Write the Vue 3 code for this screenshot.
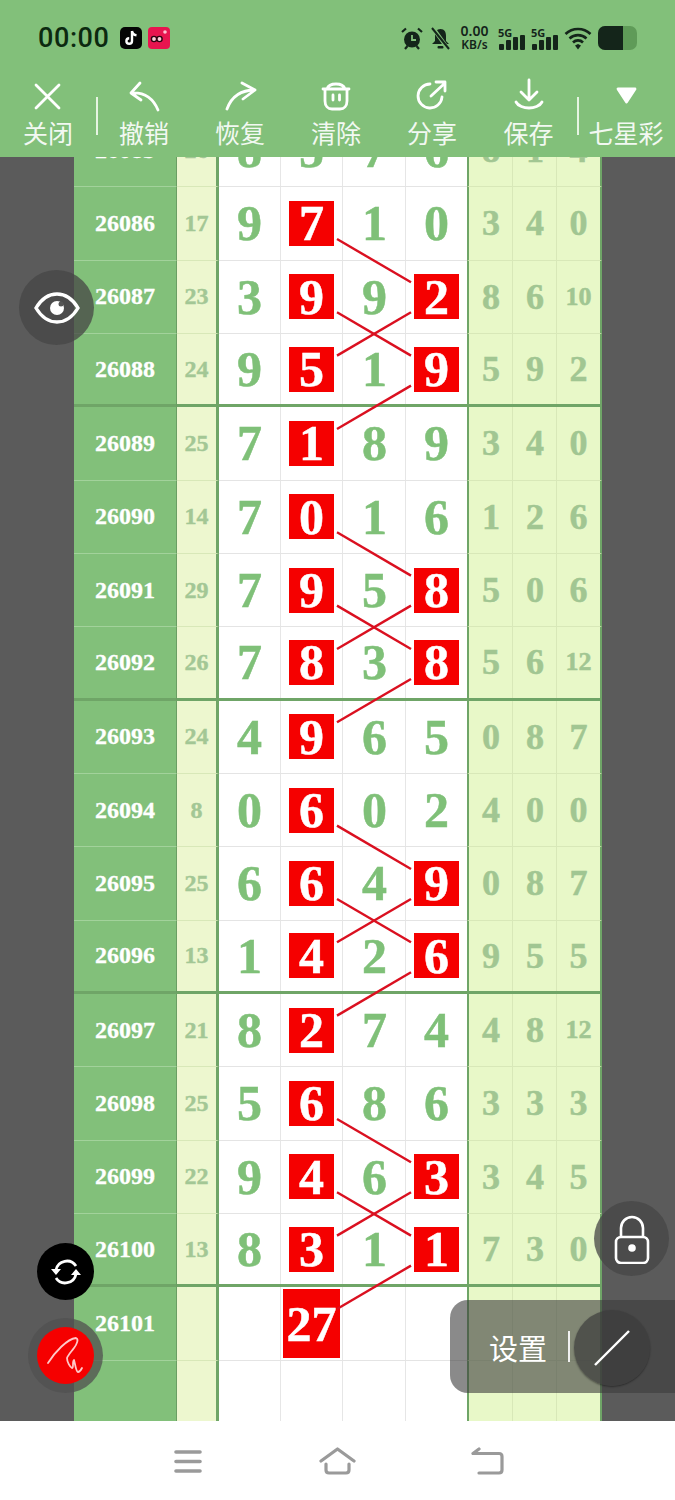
<template>
  <div class="screen">
    <!-- barra superior -->
    <header class="top">
      <div class="status">
        <span class="clock">00:00</span>
        <svg class="app-icon" width="22" height="22" viewBox="0 0 22 22">
          <rect width="22" height="22" rx="5" fill="#050505" />
          <path d="M12 4v10a2.8 2.8 0 1 1-2.8-2.8M12 4c.3 2.500 2 4 4.500 4.300" fill="none" stroke="#fff" stroke-width="2.400" />
        </svg>
        <svg class="app-icon" width="22" height="22" viewBox="0 0 22 22">
          <rect width="22" height="22" rx="4" fill="#e8144f" />
          <circle cx="6" cy="12" r="2.600" fill="#ffd0dc" stroke="#2a0410" stroke-width="1.400" />
          <circle cx="11.500" cy="12" r="2.600" fill="#ffd0dc" stroke="#2a0410" stroke-width="1.400" />
          <circle cx="17" cy="5" r="1.800" fill="#ffc0d0" />
        </svg>
        <div class="status-right">
          <svg class="alarm" width="22" height="23" viewBox="0 0 22 23">
            <circle cx="11" cy="12.500" r="8" fill="#14251a" />
            <path d="M11 8v5h4" fill="none" stroke="#82c07a" stroke-width="1.800" />
            <path d="M1 5l4-3.500M21 5l-4-3.500M4 22l2.500-3M18 22l-2.500-3" stroke="#14251a" stroke-width="2.200" />
          </svg>
          <svg class="bell" width="21" height="23" viewBox="0 0 21 23">
            <path d="M10.500 2C6.500 2 5 5 5 9v5l-3 3h17l-3-3V9c0-4-1.500-7-5.500-7z" fill="#14251a" />
            <rect x="7.500" y="19" width="6" height="2.500" rx="1" fill="#14251a" />
            <path d="M3 1l15 21" stroke="#82c07a" stroke-width="4" />
            <path d="M2 1l17 21" stroke="#14251a" stroke-width="2" />
          </svg>
          <div class="speed"><b>0.00</b><span>KB/s</span></div>
          <div v-for="n in 2" :key="n" class="signal">
            <span class="five-g">5G</span>
            <i v-for="h in [6, 10, 13, 15]" :key="h" :style="{ height: h + 'px' }"></i>
          </div>
          <svg class="wifi" width="28" height="23" viewBox="0 0 28 23">
            <path d="M1.500 7a18 18 0 0 1 25 0M5.500 11.500a12.500 12.500 0 0 1 17 0M9 15.500a7 7 0 0 1 10 0" fill="none" stroke="#14251a" stroke-width="2.600" />
            <path d="M11 18.500l3-1.500 3 1.500-3 4z" fill="#14251a" />
          </svg>
          <div class="battery"><div class="level"></div></div>
        </div>
      </div>

      <nav class="tools">
        <div v-for="tool in tools" :key="tool.label" class="tool" :class="{ sep: tool.sep }" :style="{ width: tool.w + 'px' }">
          <svg width="36" height="36" viewBox="0 0 36 36" fill="none" stroke="#fff" stroke-width="2.800" stroke-linecap="round" stroke-linejoin="round">
            <g v-if="tool.icon === 'close'"><path d="M6 7l23 23M29 7L6 30" /></g>
            <g v-if="tool.icon === 'undo'"><path d="M14 5L5 15l10 7M5 15c13-1 22 5 27 17" /></g>
            <g v-if="tool.icon === 'redo'"><path d="M20 5l13 7-12 9M33 12C18 12 9 20 5 31" /></g>
            <g v-if="tool.icon === 'clear'"><path d="M5 11h26M9 11c1-3 4-5 9-5s8 2 9 5M7 11v12c0 5 3 8 7 8h8c4 0 7-3 7-8V11M15 17v5M21.500 17v5" /></g>
            <g v-if="tool.icon === 'share'"><path d="M28 19a12 12 0 1 1-12-13M17 18L31 5M22 4h9v9" /></g>
            <g v-if="tool.icon === 'save'"><path d="M18 2v20M10 14l8 8 8-8M5 24c2 4 8 6 13 6s11-2 13-6" /></g>
            <g v-if="tool.icon === 'down'"><path d="M10 11h17l-8.500 13z" fill="#fff" /></g>
          </svg>
          <span>{{ tool.label }}</span>
        </div>
      </nav>
    </header>

    <!-- tabla de sorteos -->
    <main class="sheet">
      <div class="table-clip">
        <div class="table">
          <div v-for="(row, r) in rows" :key="r" class="row" :class="{ thick: row.thick }">
            <div class="id">{{ row.id }}</div>
            <div class="sum">{{ row.sum }}</div>
            <div class="cells">
              <div v-for="(d, c) in row.digits" :key="c" class="cell">
                <span v-if="row.reds.includes(c)" class="red">{{ d }}</span>
                <template v-else>{{ d }}</template>
              </div>
              <span v-if="row.big" class="big">{{ row.big }}</span>
            </div>
            <div class="extras">
              <div v-for="(d, c) in row.extra" :key="c" class="extra" :class="{ small: String(d).length > 1 }">{{ d }}</div>
            </div>
          </div>
          <svg class="links" width="600" height="1400">
            <line v-for="(l, i) in links" :key="i" :x1="l.x1" :y1="l.y1" :x2="l.x2" :y2="l.y2" stroke="#da1020" stroke-width="2.400" />
          </svg>
        </div>
      </div>
    </main>

    <footer class="nav">
      <svg width="32" height="26" viewBox="0 0 32 26" fill="none" stroke="#9a9a9a" stroke-width="3.600" stroke-linecap="round">
        <path d="M4 4h24M4 13.500h24M4 23h24" />
      </svg>
      <svg width="37" height="28" viewBox="0 0 37 28" fill="none" stroke="#9a9a9a" stroke-width="3.200" stroke-linecap="round" stroke-linejoin="round">
        <path d="M2 14L18.500 2 35 14M7 17v6c0 2 1 3 3 3h17c2 0 3-1 3-3v-6" />
      </svg>
      <svg width="34" height="28" viewBox="0 0 34 28" fill="none" stroke="#9a9a9a" stroke-width="3.200" stroke-linecap="round" stroke-linejoin="round">
        <path d="M8 2L2 6.500h26c2 0 3 1 3 3V23c0 2-1 3-3 3H8" />
      </svg>
    </footer>

    <!-- controles flotantes -->
    <button class="float eye">
      <svg width="46" height="34" viewBox="0 0 46 34">
        <path d="M2 17C8 7 15 3 23 3s15 4 21 14c-6 10-13 14-21 14S8 27 2 17z" fill="none" stroke="#fff" stroke-width="3.400" />
        <circle cx="23" cy="17" r="7" fill="#fff" />
        <circle cx="27" cy="13" r="2.500" fill="#555" />
      </svg>
    </button>
    <button class="float lock">
      <svg width="36" height="50" viewBox="0 0 36 50" fill="none" stroke="#fff" stroke-width="2.600">
        <path d="M7 23v-9a11 11 0 0 1 22 0v9" />
        <rect x="2" y="23" width="32" height="26" rx="5" />
        <circle cx="18" cy="34" r="3.800" fill="#fff" stroke="none" />
      </svg>
    </button>
    <button class="float sync">
      <svg width="30" height="30" viewBox="0 0 30 30" fill="none" stroke="#fff" stroke-width="2.800">
        <path d="M25 9A11 11 0 0 0 5 13M5 21A11 11 0 0 0 25 17" />
        <path d="M0 12h10l-5 6zM20 18h10l-5-6z" fill="#fff" stroke="none" />
      </svg>
    </button>
    <div class="float pen-ring">
      <div class="pen">
        <svg width="57" height="57" viewBox="0 0 57 57" fill="none" stroke="#ffc8c8" stroke-width="1.800" stroke-linecap="round" stroke-linejoin="round">
          <path d="M11 36C18 25 30 12 39 11c3 1 1 6-2 10-3 4-6 7-7 10 0 4 3 9 5 10 2 0 0-7 2-8 1 3 2 12 4 12 2 0 3-2 4-4" />
        </svg>
      </div>
    </div>
    <div class="settings">
      <span>设置</span>
      <i class="bar"></i>
      <div class="slash">
        <svg width="38" height="38" viewBox="0 0 38 38"><path d="M2 36L36 2" stroke="#fff" stroke-width="2.400" /></svg>
      </div>
    </div>
  </div>
</template>

<script setup>
const tools = [
  { label: '关闭', icon: 'close', w: 96 },
  { label: '撤销', icon: 'undo', w: 96, sep: true },
  { label: '恢复', icon: 'redo', w: 96 },
  { label: '清除', icon: 'clear', w: 96 },
  { label: '分享', icon: 'share', w: 96 },
  { label: '保存', icon: 'save', w: 97 },
  { label: '七星彩', icon: 'down', w: 98, sep: true }
]

// id, suma, cuatro cifras, posiciones en rojo, tres cifras extra
const raw = [
  [26085, 26, [8, 5, 7, 6], [], [8, 1, 4]],
  [26086, 17, [9, 7, 1, 0], [1], [3, 4, 0]],
  [26087, 23, [3, 9, 9, 2], [1, 3], [8, 6, 10]],
  [26088, 24, [9, 5, 1, 9], [1, 3], [5, 9, 2]],
  [26089, 25, [7, 1, 8, 9], [1], [3, 4, 0]],
  [26090, 14, [7, 0, 1, 6], [1], [1, 2, 6]],
  [26091, 29, [7, 9, 5, 8], [1, 3], [5, 0, 6]],
  [26092, 26, [7, 8, 3, 8], [1, 3], [5, 6, 12]],
  [26093, 24, [4, 9, 6, 5], [1], [0, 8, 7]],
  [26094, 8, [0, 6, 0, 2], [1], [4, 0, 0]],
  [26095, 25, [6, 6, 4, 9], [1, 3], [0, 8, 7]],
  [26096, 13, [1, 4, 2, 6], [1, 3], [9, 5, 5]],
  [26097, 21, [8, 2, 7, 4], [1], [4, 8, 12]],
  [26098, 25, [5, 6, 8, 6], [1], [3, 3, 3]],
  [26099, 22, [9, 4, 6, 3], [1, 3], [3, 4, 5]],
  [26100, 13, [8, 3, 1, 1], [1, 3], [7, 3, 0]]
]

const rows = raw.map((r, i) => ({
  id: r[0],
  sum: r[1],
  digits: r[2],
  reds: r[3],
  extra: r[4],
  thick: i % 4 === 3
}))
rows.push({ id: 26101, sum: '', digits: ['', '', '', ''], reds: [], extra: ['', '', ''], big: 27, thick: false })
rows.push({ id: '', sum: '', digits: ['', '', '', ''], reds: [], extra: ['', '', ''], thick: false })

const ROW = 73.33
const center = (i) => ROW * i + ROW / 2

// [fila columna 2, fila columna 4]
const pairs = [
  [1, 2], [3, 2], [2, 3], [4, 3],
  [5, 6], [7, 6], [6, 7], [8, 7],
  [9, 10], [11, 10], [10, 11], [12, 11],
  [13, 14], [15, 14], [14, 15], [16, 15]
]
const links = pairs.map(([a, b]) => {
  const dir = b > a ? 1 : -1
  return { x1: 263, y1: center(a) + 15 * dir, x2: 337, y2: center(b) - 15 * dir }
})
</script>

<style>
html, body { margin: 0; padding: 0; }
</style>

<style scoped>
.screen {
  position: relative;
  width: 675px;
  height: 1500px;
  overflow: hidden;
  display: flex;
  flex-direction: column;
  font-family: "Liberation Serif", serif;
}

/* cabecera */
.top {
  height: 157px;
  background: #82c07a;
  flex: none;
}
.status {
  display: flex;
  align-items: center;
  height: 76px;
  padding: 0 38px;
  box-sizing: border-box;
}
.clock {
  font: 500 27px "Roboto", sans-serif;
  letter-spacing: 0.600px;
  color: #0c2a10;
  margin-right: 10px;
}
.app-icon { margin-right: 6px; }
.status-right {
  margin-left: auto;
  display: flex;
  align-items: center;
}
.bell { margin-left: 7px; }
.speed {
  display: flex;
  flex-direction: column;
  align-items: center;
  width: 29px;
  margin: 0 9px;
  font: 700 14px "Noto Sans", sans-serif;
  line-height: 14px;
  color: #14251a;
}
.speed b { font-weight: 600; }
.speed span { font-size: 12px; font-weight: 600; }
.signal {
  position: relative;
  display: flex;
  align-items: flex-end;
  gap: 2px;
  height: 24px;
  width: 27px;
  margin-right: 6px;
  padding-left: 1px;
  box-sizing: border-box;
}
.signal i {
  width: 5px;
  background: #14251a;
  border-radius: 1px;
}
.five-g {
  position: absolute;
  left: 0;
  top: -1px;
  font: 700 11px "Noto Sans", sans-serif;
  color: #14251a;
}
.wifi { margin-right: 6px; }
.battery {
  width: 39px;
  height: 24px;
  border-radius: 7px;
  background: #5f9b58;
  overflow: hidden;
}
.level {
  width: 25px;
  height: 100%;
  background: #14251a;
}
.tools {
  display: flex;
  height: 81px;
}
.tool {
  position: relative;
  display: flex;
  flex-direction: column;
  align-items: center;
  color: #fff;
  font: 400 25px "Noto Sans CJK SC", sans-serif;
  line-height: 34px;
}
.tool svg { margin-top: 2px; margin-bottom: 1px; }
.tool span { opacity: 0.9; white-space: nowrap; }
.tool.sep::before {
  content: "";
  position: absolute;
  left: 0;
  top: 21px;
  width: 2px;
  height: 38px;
  background: #e6f4e2;
}

/* tabla */
.sheet {
  flex: 1;
  min-height: 0;
  background: #5b5b5b;
  padding: 0 73px 0 74px;
}
.table-clip {
  height: 100%;
  overflow: hidden;
  background: #fff;
}
.table {
  position: relative;
  margin-top: -43px;
}
.row {
  display: flex;
  height: 73.330px;
  align-items: stretch;
  --line-id: #a2d29b;
  --line-cell: #e4e4e4;
  --line-soft: #d8e8b8;
}
.row.thick {
  --line-id: #6fa567;
  --line-cell: #6fa567;
  --line-soft: #6fa567;
}
.row > div {
  box-sizing: border-box;
  flex: none;
  border-bottom: 1px solid var(--line-cell);
}
.row.thick > div { border-bottom-width: 3px; }
.row > .id {
  width: 103px;
  background: #82c07a;
  border-right: 1px solid #6a9e63;
  border-bottom-color: var(--line-id);
  color: #fff;
  font-size: 24px;
  font-weight: 700;
  -webkit-text-stroke: 0.300px #fff;
  display: flex;
  align-items: center;
  justify-content: center;
}
.row > .sum {
  width: 42px;
  background: #edf7cf;
  color: #a3c795;
  font-size: 24px;
  font-weight: 700;
  -webkit-text-stroke: 0.400px #a3c795;
  border-bottom-color: var(--line-soft);
  display: flex;
  align-items: center;
  justify-content: center;
  border-right: 3px solid #6fa567;
}
.row > .cells {
  position: relative;
  width: 248px;
  display: grid;
  grid-template-columns: 62px 62px 63px 61px;
}
.cell {
  display: flex;
  align-items: center;
  justify-content: center;
  color: #7fc078;
  font-size: 50px;
  font-weight: 700;
  -webkit-text-stroke: 0.500px #7fc078;
  box-shadow: inset -1px 0 0 #e6e6e6;
}
.cell:nth-child(-n + 2) { padding-right: 1px; }
.cell:nth-child(4) { box-shadow: none; }
.red {
  width: 45px;
  height: 45px;
  background: #f50000;
  color: #fff;
  -webkit-text-stroke: 0.500px #fff;
  display: flex;
  align-items: center;
  justify-content: center;
}
.big {
  position: absolute;
  left: 64px;
  top: 2px;
  width: 57px;
  height: 69px;
  background: #f50000;
  color: #fff;
  font-size: 50px;
  font-weight: 700;
  -webkit-text-stroke: 0.500px #fff;
  display: flex;
  align-items: center;
  justify-content: center;
}
.row > .extras {
  width: 135px;
  background: #e8f8c8;
  border-left: 2px solid #6fa567;
  border-right: 2px solid #6fa567;
  border-bottom-color: var(--line-soft);
  display: grid;
  grid-template-columns: 44px 44px 43px;
}
.extra {
  display: flex;
  align-items: center;
  justify-content: center;
  color: #a1c692;
  font-size: 36px;
  font-weight: 700;
  -webkit-text-stroke: 0.500px #a1c692;
  box-shadow: inset -1px 0 0 #d8e8b8;
}
.extra:last-child { box-shadow: none; }
.extra.small { font-size: 26px; }
.links {
  position: absolute;
  left: 0;
  top: 0;
  pointer-events: none;
}

/* navegación inferior */
.nav {
  flex: none;
  height: 79px;
  background: #fff;
  display: flex;
  align-items: center;
  gap: 115px;
  padding-left: 172px;
  box-sizing: border-box;
}

/* flotantes */
.float {
  position: absolute;
  border: none;
  padding: 0;
  border-radius: 50%;
  display: flex;
  align-items: center;
  justify-content: center;
}
.eye {
  left: 19px;
  top: 270px;
  width: 75px;
  height: 75px;
  background: rgba(70, 70, 70, 0.75);
}
.lock {
  left: 594px;
  top: 1201px;
  width: 75px;
  height: 75px;
  background: rgba(70, 70, 70, 0.75);
}
.sync {
  left: 37px;
  top: 1243px;
  width: 57px;
  height: 57px;
  background: #000;
}
.pen-ring {
  left: 28px;
  top: 1318px;
  width: 75px;
  height: 75px;
  background: rgba(80, 80, 80, 0.75);
}
.pen {
  width: 57px;
  height: 57px;
  border-radius: 50%;
  background: #f50000;
}
.settings {
  position: absolute;
  left: 450px;
  top: 1300px;
  width: 225px;
  height: 93px;
  border-radius: 18px 0 0 18px;
  background: rgba(60, 60, 60, 0.6);
  color: #fff;
  display: flex;
  align-items: center;
  font: 400 29px "Noto Sans CJK SC", sans-serif;
  padding-left: 39px;
  box-sizing: border-box;
}
.bar {
  width: 2px;
  height: 31px;
  background: #f0f0f0;
  margin-left: 21px;
}
.slash {
  position: absolute;
  left: 124px;
  top: 10px;
  width: 76px;
  height: 76px;
  border-radius: 50%;
  background: rgba(60, 60, 60, 0.7);
  box-shadow: 0 1px 2px rgba(0, 0, 0, 0.4);
  display: flex;
  align-items: center;
  justify-content: center;
}
</style>
